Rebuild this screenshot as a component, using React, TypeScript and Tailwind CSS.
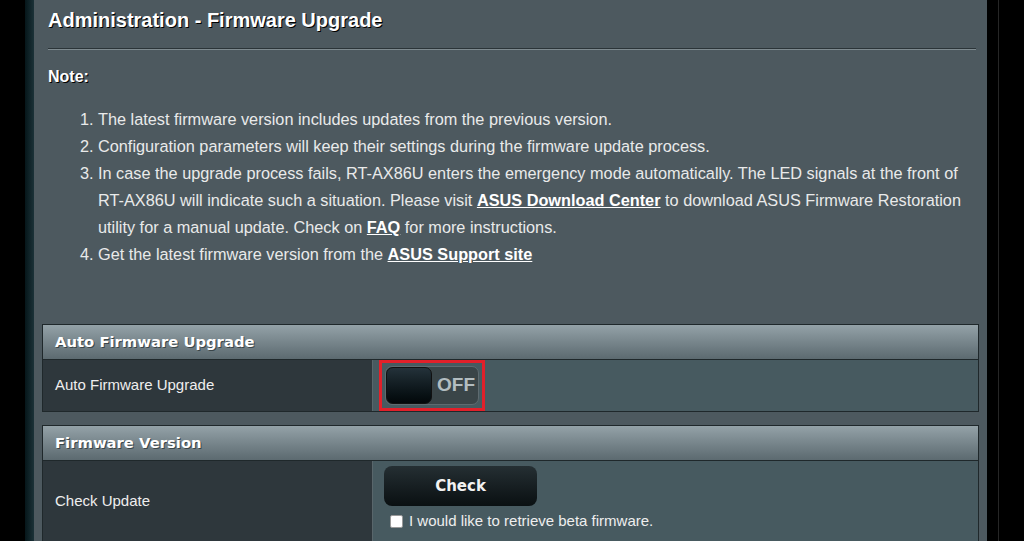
import React from "react";

const noteItems: React.ReactNode[] = [
  <>The latest firmware version includes updates from the previous version.</>,
  <>Configuration parameters will keep their settings during the firmware update process.</>,
  <>
    In case the upgrade process fails, RT-AX86U enters the emergency mode automatically. The LED
    signals at the front of RT-AX86U will indicate such a situation. Please visit{" "}
    <a className="font-bold text-white underline">ASUS Download Center</a> to download ASUS Firmware
    Restoration utility for a manual update. Check on{" "}
    <a className="font-bold text-white underline">FAQ</a> for more instructions.
  </>,
  <>
    Get the latest firmware version from the{" "}
    <a className="font-bold text-white underline">ASUS Support site</a>
  </>,
];

function SectionHeader({ title }: { title: string }) {
  return (
    <div className="h-[35px] flex items-center px-[12px] bg-gradient-to-b from-[#94a2a8] to-[#5c6a70] border-b border-[#1f282b]">
      <span className="font-['DejaVu_Sans',sans-serif] font-bold text-[14.8px] text-white [text-shadow:1px_1px_0_#3a4549]">
        {title}
      </span>
    </div>
  );
}

function OffSwitch() {
  return (
    <div className="border-[3px] border-[#e2202a] h-full px-[3px] flex items-center">
      <div className="w-[94px] h-[39px] rounded-[7px] bg-[#3a4548] border border-[#5e6b70] flex items-center">
        <div className="w-[46px] h-[37px] rounded-[7px] bg-gradient-to-b from-[#24323a] to-[#03080a] border border-[#111]" />
        <span className="ml-[5px] font-['Liberation_Sans',sans-serif] font-bold text-[19px] text-[#b3bdc0]">
          OFF
        </span>
      </div>
    </div>
  );
}

export default function App() {
  return (
    <div className="flex h-[541px] w-[1024px] overflow-hidden bg-black font-['Liberation_Sans',Arial,sans-serif]">
      <div className="w-[25px] shrink-0 bg-black" />
      <div className="w-[9px] shrink-0 bg-gradient-to-r from-[#06161a] to-[#1b3238]" />

      <main className="w-[953px] shrink-0 bg-[#4d595f] text-[#e9eaea]">
        <div className="pl-[14px] pr-[11px] pt-[8px]">
          <h1 className="text-[20px] leading-[24px] font-bold text-white [text-shadow:1px_1px_0_#000]">
            Administration - Firmware Upgrade
          </h1>
          <div className="mt-[16px] h-[2px] border-t border-[#2b3438] border-b border-b-[#7f8b90]" />
          <div className="mt-[17px] text-[16px] leading-[20px] font-bold text-white [text-shadow:1px_1px_0_#000]">
            Note:
          </div>
          <ol className="mt-[19px] ml-[32px] w-[908px] text-[16.3px] leading-[27px]">
            {noteItems.map((item, i) => (
              <li key={i} className="flex">
                <span className="w-[18px] shrink-0">{i + 1}.</span>
                <span>{item}</span>
              </li>
            ))}
          </ol>
        </div>

        <div className="mx-[8px] mt-[56px] flex flex-col gap-[13px]">
          {/* Auto upgrade */}
          <section className="border border-[#1f282b]">
            <SectionHeader title="Auto Firmware Upgrade" />
            <div className="flex h-[51px]">
              <div className="w-[329px] shrink-0 bg-[#2e373c] flex items-center px-[12px] text-[15px] text-[#eeeeee]">
                Auto Firmware Upgrade
              </div>
              <div className="flex-1 bg-[#475a60] pl-[6px] border-l border-[#59666b]">
                <div className="inline-block h-full">
                  <OffSwitch />
                </div>
              </div>
            </div>
          </section>

          {/* Firmware version */}
          <section className="border border-[#1f282b]">
            <SectionHeader title="Firmware Version" />
            <div className="flex h-[80px]">
              <div className="w-[329px] shrink-0 bg-[#2e373c] flex items-center px-[12px] text-[15px] text-[#eeeeee]">
                Check Update
              </div>
              <div className="flex-1 bg-[#475a60] border-l border-[#59666b] pl-[11px] pt-[5px]">
                <button className="w-[153px] h-[40px] rounded-[8px] bg-gradient-to-b from-[#252f33] to-[#0a1012] text-[15px] font-bold text-[#f2f2f2] font-['DejaVu_Sans',sans-serif]">
                  Check
                </button>
                <label className="mt-[4px] flex items-center text-[15px] text-[#eeeeee]">
                  <input
                    type="checkbox"
                    className="ml-[6px] mr-[6px] w-[13px] h-[13px] appearance-none rounded-[2px] bg-white border border-[#999]"
                  />
                  I would like to retrieve beta firmware.
                </label>
              </div>
            </div>
          </section>
        </div>
      </main>

      <div className="w-[11px] shrink-0 bg-black" />
      <div className="w-[1px] shrink-0 bg-[#262626]" />
      <div className="flex-1 bg-black" />
    </div>
  );
}
